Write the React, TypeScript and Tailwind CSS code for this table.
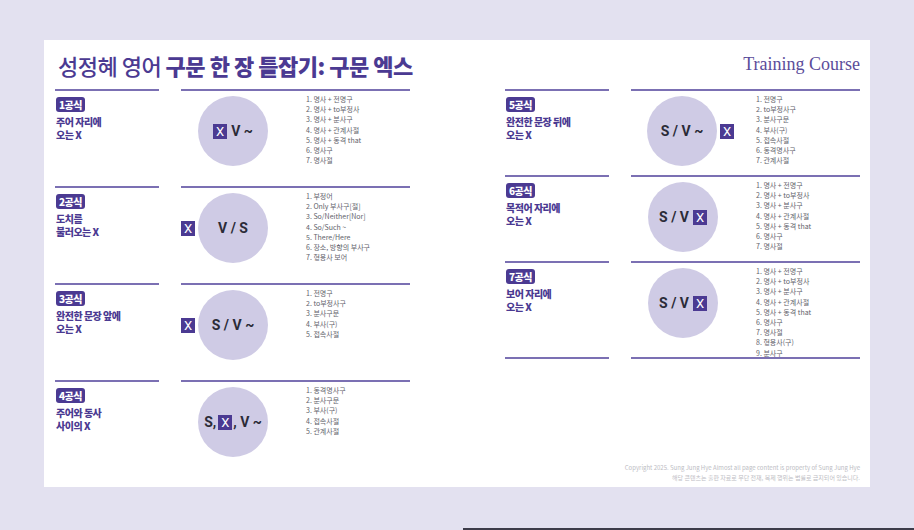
import React from "react";

type Vis = "xv" | "vs" | "sv" | "sxv" | "svAfter" | "svx";

interface Formula {
  n: number;
  title: string[];
  items: string[];
  vis: Vis;
  h: string;
}

const nounList = [
  "명사 + 전명구",
  "명사 + to부정사",
  "명사 + 분사구",
  "명사 + 관계사절",
  "명사 + 동격 that",
  "명사구",
  "명사절",
];

const leftCol: Formula[] = [
  { n: 1, title: ["주어 자리에", "오는 X"], items: nounList, vis: "xv", h: "h-[97px]" },
  {
    n: 2,
    title: ["도치를", "불러오는 X"],
    items: [
      "부정어",
      "Only 부사구[절]",
      "So/Neither[Nor]",
      "So/Such ~",
      "There/Here",
      "장소, 방향의 부사구",
      "형용사 보어",
    ],
    vis: "vs",
    h: "h-[97px]",
  },
  {
    n: 3,
    title: ["완전한 문장 앞에", "오는 X"],
    items: ["전명구", "to부정사구", "분사구문", "부사(구)", "접속사절"],
    vis: "sv",
    h: "h-[97px]",
  },
  {
    n: 4,
    title: ["주어와 동사", "사이의 X"],
    items: ["동격명사구", "분사구문", "부사(구)", "접속사절", "관계사절"],
    vis: "sxv",
    h: "flex-1",
  },
];

const rightCol: Formula[] = [
  {
    n: 5,
    title: ["완전한 문장 뒤에", "오는 X"],
    items: ["전명구", "to부정사구", "분사구문", "부사(구)", "접속사절", "동격명사구", "관계사절"],
    vis: "svAfter",
    h: "h-[86px]",
  },
  { n: 6, title: ["목적어 자리에", "오는 X"], items: nounList, vis: "svx", h: "h-[86px]" },
  {
    n: 7,
    title: ["보어 자리에", "오는 X"],
    items: [...nounList, "형용사(구)", "분사구"],
    vis: "svx",
    h: "h-[96px]",
  },
];

const XBox = () => (
  <span className="inline-flex h-[15px] w-[14px] shrink-0 items-center justify-center bg-[#4b3a92] font-['Roboto',sans-serif] text-[13px] font-normal leading-none text-white">
    X
  </span>
);

const Circle = ({ children }: { children: React.ReactNode }) => (
  <div className="flex h-[70px] w-[70px] shrink-0 items-center justify-center gap-[4px] rounded-full bg-[#cfcbe5] font-['Roboto',sans-serif] text-[14px] font-bold whitespace-pre text-[#2b2b38]">
    {children}
  </div>
);

const Visual = ({ vis }: { vis: Vis }) => {
  if (vis === "vs" || vis === "sv") {
    return (
      <div className="flex items-center gap-[3px]">
        <XBox />
        <Circle>{vis === "vs" ? "V / S" : "S / V ~"}</Circle>
      </div>
    );
  }
  if (vis === "svAfter") {
    return (
      <div className="flex items-center gap-[3px] pl-[16px]">
        <Circle>S / V ~</Circle>
        <XBox />
      </div>
    );
  }
  return (
    <div className="flex items-center pl-[17px]">
      {vis === "xv" && (
        <Circle>
          <XBox />
          <span>V ~</span>
        </Circle>
      )}
      {vis === "svx" && (
        <Circle>
          <span>S / V</span>
          <XBox />
        </Circle>
      )}
      {vis === "sxv" && (
        <Circle>
          <span className="-mr-[2px]">S,</span>
          <XBox />
          <span className="-ml-[3px]">, V ~</span>
        </Circle>
      )}
    </div>
  );
};

const Block = ({ f }: { f: Formula }) => (
  <div className={`flex gap-[22px] ${f.h}`}>
    <div className="flex w-[104px] flex-col items-start border-t-2 border-[#7b70b3] pt-[6px] pl-px">
      <div className="flex h-[15px] items-center rounded-[3px] bg-[#4b3a92] px-[3px] text-[10px] leading-none font-black tracking-[-0.5px] text-white">
        {f.n}공식
      </div>
      <div className="mt-[3px] text-[10px] leading-[13px] font-black tracking-[-0.5px] text-[#4b3a92]">
        {f.title.map((t) => (
          <div key={t}>{t}</div>
        ))}
      </div>
    </div>
    <div className="flex w-[229px] items-start border-t-2 border-[#7b70b3]">
      <div className="w-[125px] shrink-0 pt-[5px]">
        <Visual vis={f.vis} />
      </div>
      <ul className="pt-[3px] text-[7px] leading-[10.2px] text-[#62626b]">
        {f.items.map((it, i) => (
          <li key={i}>
            {i + 1}. {it}
          </li>
        ))}
      </ul>
    </div>
  </div>
);

export default function App() {
  return (
    <div className="flex h-[530px] w-[914px] flex-col bg-[#e3e1f0] font-['Noto_Sans_CJK_KR','Noto_Sans',sans-serif]">
      <div className="mt-[40px] ml-[44px] flex h-[447px] w-[826px] flex-col bg-white pr-[10px] pl-[11px]">
        <div className="flex h-[49px] items-center justify-between">
          <h1 className="pl-[3px] text-[22px] leading-none tracking-[-0.5px] text-[#4b3a92]">
            <span className="font-medium">성정혜 영어 </span>
            <span className="font-black">구문 한 장 틀잡기: 구문 엑스</span>
          </h1>
          <div className="font-['Liberation_Serif',serif] text-[18px] text-[#5b4c9a]">
            Training Course
          </div>
        </div>
        <div className="flex flex-1 gap-[95px]">
          <div className="flex w-[355px] flex-col">
            {leftCol.map((f) => (
              <Block key={f.n} f={f} />
            ))}
          </div>
          <div className="flex w-[355px] flex-col">
            {rightCol.map((f) => (
              <Block key={f.n} f={f} />
            ))}
            <div className="flex gap-[22px]">
              <div className="w-[104px] border-t-2 border-[#7b70b3]" />
              <div className="w-[229px] border-t-2 border-[#7b70b3]" />
            </div>
            <div className="mt-auto pb-[4px] text-right text-[6px] leading-[10px] text-[#bdbdc4]">
              <div>Copyright 2025. Sung Jung Hye Almost all page content is property of Sung Jung Hye</div>
              <div>해당 콘텐츠는 출판 자료로 무단 전재, 복제 행위는 법률로 금지되어 있습니다.</div>
            </div>
          </div>
        </div>
      </div>
      <div className="mt-auto ml-[463px] h-[2px] bg-[#3d3c4a]" />
    </div>
  );
}
